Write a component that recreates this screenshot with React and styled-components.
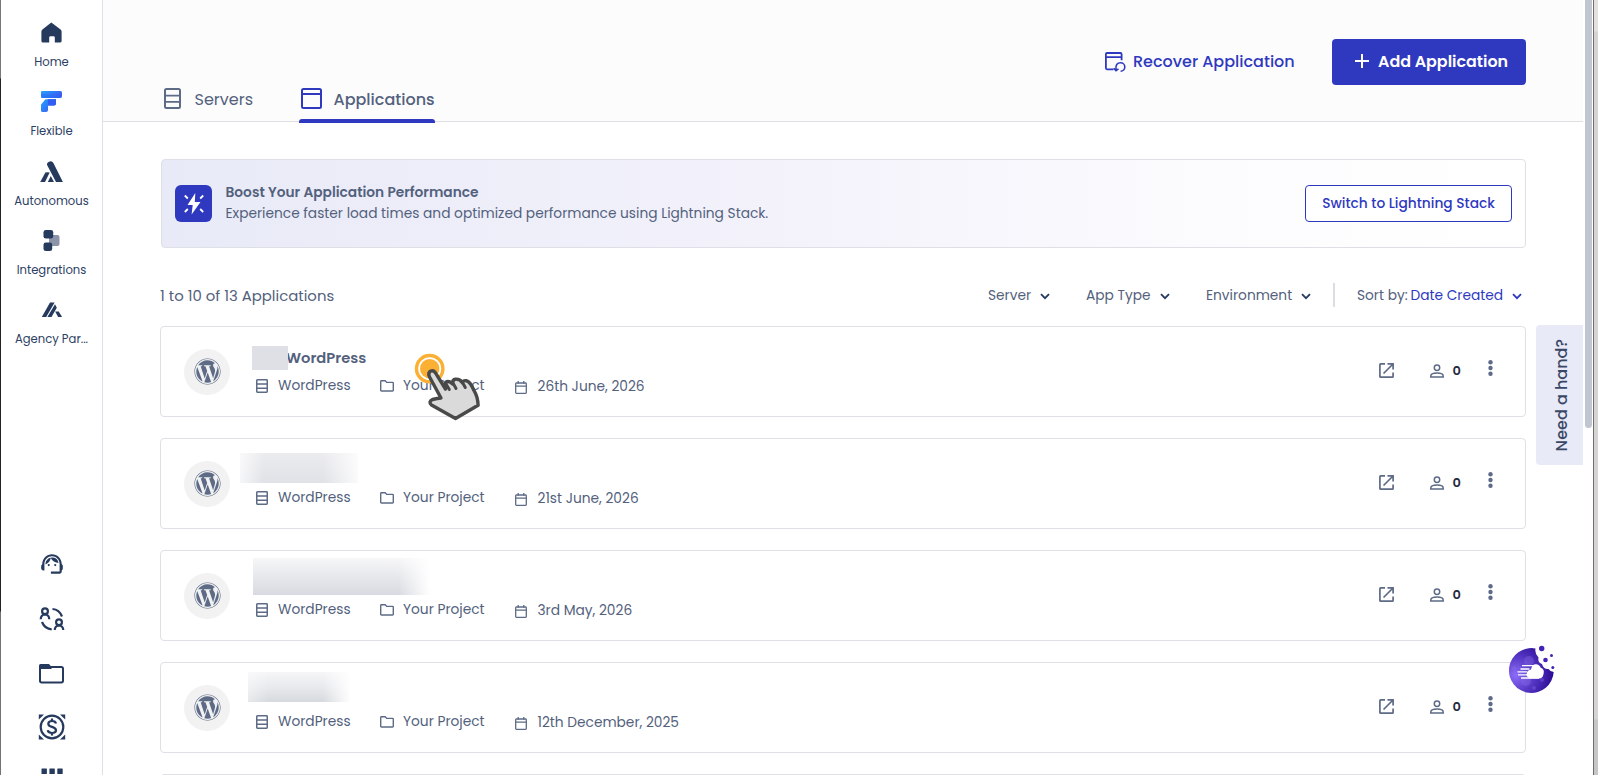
import React from "react";
import styled, { createGlobalStyle } from "styled-components";
import { FaWordpress } from "react-icons/fa";
import { MdOutlineSupportAgent } from "react-icons/md";

const navItems = [
  { label: "Home", icon: HomeIcon },
  { label: "Flexible", icon: FlexibleIcon },
  { label: "Autonomous", icon: AutonomousIcon },
  { label: "Integrations", icon: IntegrationsIcon },
  { label: "Agency Par...", icon: AgencyIcon },
];

const filters = [
  { label: "Server", width: 98 },
  { label: "App Type", width: 120 },
  { label: "Environment", width: 127 },
];

const apps = [
  { date: "26th June, 2026", name: "WordPress", mask: { left: 22, top: 19, width: 36, height: 24, kind: "flat" } },
  { date: "21st June, 2026", mask: { left: 10, top: 14, width: 118, height: 30, kind: "soft" } },
  { date: "3rd May, 2026", mask: { left: 23, top: 7, width: 177, height: 37, kind: "deep" } },
  { date: "12th December, 2025", mask: { left: 18, top: 9, width: 107, height: 30, kind: "fade" } },
];

function App() {
  return (
    <Page>
      <GlobalStyle />
      <LeftEdge />
      <Sidebar>
        <Nav>
          {navItems.map(({ label, icon: Icon }) => (
            <NavItem key={label}>
              <NavIcon><Icon /></NavIcon>
              <NavLabel>{label}</NavLabel>
            </NavItem>
          ))}
        </Nav>
        <Tools>
          <Tool $height={55}><MdOutlineSupportAgent size={26} /></Tool>
          <Tool $height={55}><SwapUsersIcon /></Tool>
          <Tool $height={54}><BigFolderIcon /></Tool>
          <Tool $height={54}><DollarIcon /></Tool>
          <Tool $height={50}><GridIcon /></Tool>
        </Tools>
      </Sidebar>
      <Main>
        <Header>
          <Tabs>
            <Tab $width={89}>
              <ServerIcon width={17} height={21} thick />
              <TabText>Servers</TabText>
            </Tab>
            <Tab $width={136} $active>
              <WindowIcon />
              <TabText $active>Applications</TabText>
            </Tab>
          </Tabs>
          <Actions>
            <RecoverLink>
              <RecoverIcon />
              <ActionText>Recover Application</ActionText>
            </RecoverLink>
            <AddButton>
              <PlusIcon />
              <ActionText>Add Application</ActionText>
            </AddButton>
          </Actions>
        </Header>
        <Content>
          <Banner>
            <BannerIcon><BoltIcon /></BannerIcon>
            <BannerText>
              <BannerTitle>Boost Your Application Performance</BannerTitle>
              <BannerSub>Experience faster load times and optimized performance using Lightning Stack.</BannerSub>
            </BannerText>
            <SwitchButton>Switch to Lightning Stack</SwitchButton>
          </Banner>
          <Toolbar>
            <Count>1 to 10 of 13 Applications</Count>
            <Filters>
              {filters.map((filter) => (
                <Filter key={filter.label} $width={filter.width}>
                  <FilterText>{filter.label}</FilterText>
                  <Chevron />
                </Filter>
              ))}
              <Divider />
              <Sort>
                <SortLabel>Sort by:</SortLabel>
                <SortValue>Date Created</SortValue>
                <Chevron />
              </Sort>
            </Filters>
          </Toolbar>
          <List>
            {apps.map((app) => (
              <AppCard key={app.date} app={app} />
            ))}
            <Card />
          </List>
        </Content>
      </Main>
      <ScrollGutter><ScrollThumb /></ScrollGutter>
      <WindowEdge />
      <HelpTab><span>Need a hand?</span></HelpTab>
      <ChatBubble><CookieIcon /></ChatBubble>
      <Pointer><HandIcon /></Pointer>
    </Page>
  );
}

function AppCard({ app }) {
  return (
    <Card>
      <Avatar><FaWordpress size={27} /></Avatar>
      <Info>
        <Name>{app.name}</Name>
        <Mask $mask={app.mask} />
        <Meta>
          <MetaItem $width={124}>
            <ServerIcon width={12} height={14} />
            <MetaText $gap={10}>WordPress</MetaText>
          </MetaItem>
          <MetaItem $width={135}>
            <FolderIcon />
            <MetaText $gap={9}>Your Project</MetaText>
          </MetaItem>
          <MetaItem $width={180} $down>
            <CalendarIcon />
            <MetaText $gap={10.5}>{app.date}</MetaText>
          </MetaItem>
        </Meta>
      </Info>
      <CardActions>
        <OpenIcon />
        <Members>
          <PersonIcon />
          <MemberCount>0</MemberCount>
        </Members>
        <More><DotsIcon /></More>
      </CardActions>
    </Card>
  );
}

function HomeIcon() {
  return (
    <svg width="21" height="21" viewBox="0 0 21 21">
      <path d="M10.3 .4 19.6 7.6q1 .8 1 2V19q0 1.6-1.6 1.6h-5.2v-5q0-1.3-1.3-1.3h-3q-1.3 0-1.3 1.300v5H2Q.4 20.600.4 19V9.600q0-1.200 1-2z" fill="#263a5e" />
    </svg>
  );
}

function FlexibleIcon() {
  return (
    <svg width="21" height="21" viewBox="0 0 21 21">
      <defs>
        <linearGradient id="flex" x1="0" y1="0" x2="1" y2=".6">
          <stop offset="0" stopColor="#22a5fb" />
          <stop offset="1" stopColor="#3f55f4" />
        </linearGradient>
      </defs>
      <path d="M1 0h18.500q1.500 0 1.500 1.500V5q0 2-2 2H1.500Q0 7 0 5.500V1q0-1 1-1z" fill="url(#flex)" />
      <path d="M0 2.500 21 5.500Q20.500 7 19 7H1.500Q0 7 0 5.500z" fill="#2272f5" opacity=".55" />
      <path d="M4.500 8.300H15v4.200q0 2-2 2H7V19q0 2-2 2H1.500Q0 21 0 19.500v-6z" fill="url(#flex)" />
      <path d="M7 8.300h8v4.200q0 2-2 2H7z" fill="#315df2" />
    </svg>
  );
}

function AutonomousIcon() {
  return (
    <svg width="23" height="21" viewBox="0 0 23 21" fill="#263a5e">
      <path d="M7.200 4.300q-.8-2 1.300-3.200 3.200-2 4.900.8L22.900 21h-6.900z" />
      <path d="M5.400 11.500q1.800-.700 4.300 0L5 21H.2z" />
      <path d="M10.800 15 14 21H7.800z" />
    </svg>
  );
}

function IntegrationsIcon() {
  return (
    <svg width="17" height="21" viewBox="0 0 17 21">
      <rect x="6" y="5" width="10.500" height="11" rx="2" fill="#8c94aa" />
      <rect x=".5" y="0" width="9.700" height="8.500" rx="2.300" fill="#263a5e" />
      <rect x=".5" y="12.500" width="8.700" height="8.500" rx="2.300" fill="#263a5e" />
    </svg>
  );
}

function AgencyIcon() {
  return (
    <svg width="22" height="21" viewBox="0 0 22 21" fill="#263a5e">
      <path d="M9 3.600h4.600L5.200 18.100H.8zM14 5.200l1.800 3.500-5.300 9.400H6.400z" />
      <path d="M14.200 12.500h3.500l3.400 5.600h-4z" />
    </svg>
  );
}

function SwapUsersIcon() {
  return (
    <svg width="26" height="24" viewBox="0 0 26 24" fill="none" stroke="#263a5e" strokeWidth="2.200">
      <circle cx="6" cy="4.300" r="2.900" />
      <path d="M1.700 12.200q.3-4.500 4.300-4.700 4 .2 4.300 4.700" />
      <circle cx="20" cy="15.300" r="2.900" />
      <path d="M15.700 23q.3-4.300 4.300-4.500 4 .2 4.300 4.500M13.500 2q6.800.5 9.500 7.500M3 15q2.800 7 9.700 7.300" />
    </svg>
  );
}

function BigFolderIcon() {
  return (
    <svg width="27" height="21" viewBox="0 0 27 21">
      <rect x="2" y="4" width="23" height="15.500" rx="1.700" fill="none" stroke="#263a5e" strokeWidth="2" />
      <path d="M1 5V2.500Q1 1 2.500 1H11l2.500 3v2H1z" fill="#263a5e" />
    </svg>
  );
}

function DollarIcon() {
  return (
    <svg width="28" height="26" viewBox="0 0 28 26" fill="none" stroke="#263a5e" strokeWidth="2.200">
      <circle cx="14" cy="13" r="11.300" />
      <path d="M18 9.500Q17.500 7 14 7t-3.700 2.700q0 2.300 3.700 3.200t4 3.400Q18 19 14 19t-4.200-2.800M14 4.500v2.700M14 18.800v2.700" />
      <path d="M.8.500H6L.8 5.500zM27.200.5H22l5.200 5zM.8 25.500H6L.8 20.500zM27.200 25.500H22l5.200-5z" fill="#263a5e" stroke="none" />
    </svg>
  );
}

function GridIcon() {
  return (
    <svg width="22" height="22" viewBox="0 0 22 22" fill="#263a5e">
      {[0.5, 8.4, 16.3].map((y) => [0.5, 8.4, 16.3].map((x) => <rect key={`${x}-${y}`} x={x} y={y} width="5.400" height="5.400" rx=".5" />))}
    </svg>
  );
}

function ServerIcon({ width, height, thick }) {
  const stroke = thick ? 2 : 1.5;
  const half = stroke / 2;
  return (
    <svg width={width} height={height} fill="none" stroke="#5d6b86" strokeWidth={stroke}>
      <rect x={half} y={half} width={width - stroke} height={height - stroke} rx={thick ? 1.5 : 0.7} />
      <path d={`M1 ${height * 0.36}H${width - 1}M1 ${height * 0.66}H${width - 1}`} strokeWidth={thick ? 1.7 : 1.4} />
    </svg>
  );
}

function WindowIcon() {
  return (
    <svg width="21" height="21" fill="none" stroke="#2f39bf" strokeWidth="2">
      <rect x="1" y="1" width="19" height="19" rx="1.500" />
      <path d="M1 6h19" />
    </svg>
  );
}

function RecoverIcon() {
  return (
    <svg width="21" height="21" viewBox="0 0 21 21" fill="none" stroke="#2f39bf" strokeWidth="1.800">
      <path d="M8.500 17.300H2q-1.100 0-1.100-1.200V2.100Q.9 1 2 1h13.400q1.200 0 1.200 1.200v6M1 5.200h15.600" />
      <path d="M11 17.500q-.8-6.700 4.600-6.700a4.200 4.200 0 0 1 0 8.400M8.700 16.300l2.300 2.300 2.500-1.800" strokeWidth="1.600" />
    </svg>
  );
}

function PlusIcon() {
  return (
    <svg width="14" height="14" stroke="#fff" strokeWidth="2">
      <path d="M0 7h14M7 0v14" />
    </svg>
  );
}

function BoltIcon() {
  return (
    <svg width="22" height="22" viewBox="0 0 22 22">
      <path d="M12.300 0 4.500 12H9.700L8.600 21.500 17.500 9h-5.700z" fill="#fff" />
      <path d="M1.800 2.500l3 3M20.200 2.500l-3 3M1.800 19l3-3M20.200 19l-3-3" stroke="#fff" strokeWidth="1.800" />
    </svg>
  );
}

function Chevron() {
  return (
    <svg width="10" height="7" viewBox="0 0 10 7" fill="none" stroke="currentColor" strokeWidth="1.800">
      <path d="M1 1.200l4 4 4-4" />
    </svg>
  );
}

function FolderIcon() {
  return (
    <svg width="14" height="12" fill="none" stroke="#5d6b86" strokeWidth="1.400">
      <path d="M.7 10.300V1.500Q.7.800 1.400.8h3.800l1.500 1.600h5.900q.7 0 .7.700v7.200q0 .7-.7.700H1.400q-.7 0-.7-.7z" />
    </svg>
  );
}

function CalendarIcon() {
  return (
    <svg width="12" height="13" fill="none" stroke="#5d6b86" strokeWidth="1.300">
      <rect x=".700" y="2" width="10.600" height="10.300" rx=".800" />
      <path d="M.7 5.200h10.600M3.200 0v2.500M8.800 0v2.500" />
    </svg>
  );
}

function OpenIcon() {
  return (
    <svg width="15" height="15" fill="none" stroke="#5d6b86" strokeWidth="1.700">
      <path d="M6 .9H1.600Q.9.900.9 1.600v11.800q0 .7.7.7h11.800q.7 0 .7-.7V9.500M8.500.9h5.600v5.600M4.500 10.500 14 1" />
    </svg>
  );
}

function PersonIcon() {
  return (
    <svg width="14" height="14" fill="none" stroke="#5d6b86" strokeWidth="1.500">
      <circle cx="7" cy="3.800" r="2.700" />
      <path d="M.8 13v-1q0-3 6.200-3t6.200 3v1z" />
    </svg>
  );
}

function DotsIcon() {
  return (
    <svg width="5" height="16" fill="#5d6b86">
      <circle cx="2.500" cy="2.300" r="2.200" />
      <circle cx="2.500" cy="8" r="2.200" />
      <circle cx="2.500" cy="13.700" r="2.200" />
    </svg>
  );
}

function CookieIcon() {
  return (
    <svg width="46" height="50" viewBox="0 0 46 50">
      <defs>
        <radialGradient id="cookie" cx=".15" cy=".6" r=".85">
          <stop offset="0" stopColor="#8c6cf8" />
          <stop offset=".5" stopColor="#5436c4" />
          <stop offset="1" stopColor="#2b0b92" />
        </radialGradient>
      </defs>
      <path d="M26.500 3.500A22.400 22.400 0 1 0 44.700 27q-3.500-.3-5.200-3-5 .5-6.500-5-4.500-1.500-3.500-6.500-4-4-3-9z" fill="url(#cookie)" />
      <g fill="#8b70e8" opacity=".35">
        <circle cx="20" cy="16" r="5" />
        <circle cx="17" cy="36" r="5" />
        <circle cx="25" cy="43" r="2" />
        <circle cx="33" cy="35" r="2" />
        <circle cx="5" cy="23" r="2" />
      </g>
      <path d="M21 33.500q-4.500-1.500-3-6 1.500-3 4-3 1-5.500 5-5.300 3.500 0 4.700 3.500 3.800 1 3 5.500-.8 5.300-4.700 5.300z" fill="#fff" />
      <path d="M13 20.700h14M11.500 24h9M8.500 26.800h10M9 29.800h10M12 33h18" stroke="#fff" strokeWidth="1.300" />
      <g fill="#4322b5">
        <circle cx="32.700" cy="3.500" r="2.700" />
        <circle cx="42.500" cy="10.500" r="1.500" />
        <circle cx="36.500" cy="15" r="2.300" />
        <circle cx="43.800" cy="22.500" r="1.500" />
      </g>
    </svg>
  );
}

function HandIcon() {
  return (
    <svg width="70" height="72" viewBox="0 0 70 72">
      <circle cx="15.700" cy="16.700" r="13.200" fill="#fff" stroke="#fbb034" strokeWidth="3.400" />
      <circle cx="15.700" cy="16.700" r="9.700" fill="#fbb034" />
      <path
        d="M41.500 66.500 17.500 53q-3.500-3 1-5.500 5-1.200 8.500-1.500L15.300 24.500q-1.500-4 1.500-5.500 3-1 5 2.300L31.500 37q-.5-6 1-7.300 3.500-1 6 2.300 0-4.500 2.800-4.800 4.500-.5 7 3.500 1-2.500 4-2 4 .7 7.500 9.500 4 6.500 4.300 15z"
        fill="#dadada"
        stroke="#494949"
        strokeWidth="3.400"
        strokeLinejoin="round"
      />
      <path d="M31.500 31l3.800 6.500M39 31l3 5.500M48.500 30.500l2.800 5" stroke="#494949" strokeWidth="3" strokeLinecap="round" />
    </svg>
  );
}

export default App;

const GlobalStyle = createGlobalStyle`
  * {
    box-sizing: border-box;
  }
  body {
    margin: 0;
    overflow: hidden;
    background: #fff;
    font-family: Poppins, Inter, "Noto Sans", sans-serif;
    color: #53617d;
  }
  svg {
    display: block;
    flex-shrink: 0;
  }
  button {
    font: inherit;
    cursor: pointer;
  }
`;
const Page = styled.div`
  position: relative;
  display: flex;
  height: 775px;
  overflow: hidden;
  white-space: nowrap;
`;
const LeftEdge = styled.div`
  width: 1px;
  background: linear-gradient(#77787a 0 78px, #222 79px 611px, #737373 612px);
`;
const Sidebar = styled.aside`
  width: 102px;
  border-right: 1px solid #dfdfe6;
  display: flex;
  flex-direction: column;
  align-items: center;
  justify-content: space-between;
  padding-top: 22px;
`;
const Nav = styled.nav`
  display: flex;
  flex-direction: column;
  width: 100%;
`;
const NavItem = styled.div`
  height: 69.300px;
  display: flex;
  flex-direction: column;
  align-items: center;
`;
const NavIcon = styled.div`
  height: 21px;
  margin-bottom: 11px;
`;
const NavLabel = styled.span`
  font-size: 11.600px;
  line-height: 17px;
  color: #2c4063;
`;
const Tools = styled.div`
  height: 239px;
  flex-shrink: 0;
`;
const Tool = styled.div`
  height: ${(props) => props.$height}px;
  display: flex;
  justify-content: center;
  align-items: center;
  color: #263a5e;
`;
const Main = styled.main`
  width: 1480px;
`;
const Header = styled.header`
  height: 122px;
  border-bottom: 1px solid #dfdfe3;
  background: #fcfcfc;
  display: flex;
  justify-content: space-between;
  padding: 0 57px 0 61px;
`;
const Tabs = styled.div`
  display: flex;
  align-items: flex-end;
  gap: 46px;
  height: 123px;
`;
const Tab = styled.div`
  width: ${(props) => props.$width}px;
  height: 45px;
  display: flex;
  align-items: flex-start;
  gap: ${(props) => (props.$active ? 11.5 : 13.5)}px;
  padding: 10px 0 0 ${(props) => (props.$active ? 2 : 0)}px;
  position: relative;

  &::after {
    content: "";
    position: absolute;
    left: 0;
    right: 0;
    bottom: 0;
    height: 4px;
    border-radius: 3px 3px 0 0;
    background: ${(props) => (props.$active ? "#2f39bf" : "transparent")};
  }
`;
const TabText = styled.span`
  font-size: 16px;
  line-height: 24px;
  font-weight: ${(props) => (props.$active ? 500 : 400)};
`;
const Actions = styled.div`
  display: flex;
  align-items: center;
  height: 46px;
  margin-top: 39px;
`;
const RecoverLink = styled.a`
  display: flex;
  align-items: center;
  gap: 7px;
  width: 227px;
  color: #2f39bf;
`;
const ActionText = styled.span`
  font-size: 16px;
  font-weight: 500;
  padding-bottom: 2px;
`;
const AddButton = styled.button`
  width: 194px;
  height: 46px;
  border: none;
  border-radius: 4px;
  background: #2f39bf;
  color: #fff;
  display: flex;
  align-items: center;
  gap: 9px;
  padding: 0 0 0 23px;

  svg {
    margin-bottom: 3px;
  }
  ${ActionText} {
    font-size: 15.900px;
    font-weight: 600;
  }
`;
const Content = styled.div`
  padding: 37px 57px 0 57px;
`;
const Banner = styled.section`
  height: 89px;
  margin-left: 1px;
  border: 1px solid #dfdfe6;
  border-radius: 4px;
  background: linear-gradient(90deg, #e8eaf7, #f3f2fb 45%, #fcfcfe 78%, #fff);
  display: flex;
  align-items: center;
  padding: 0 13px;
`;
const BannerIcon = styled.div`
  width: 37px;
  height: 37px;
  border-radius: 6px;
  background: #2f39bf;
  display: flex;
  align-items: center;
  justify-content: center;
`;
const BannerText = styled.div`
  display: flex;
  flex-direction: column;
  margin-left: 13.500px;
  margin-top: -2px;
`;
const BannerTitle = styled.span`
  font-size: 13.750px;
  line-height: 21px;
  font-weight: 600;
`;
const BannerSub = styled.span`
  font-size: 13.750px;
  line-height: 21px;
`;
const SwitchButton = styled.button`
  margin-left: auto;
  width: 207px;
  height: 37px;
  padding: 0;
  border: 1px solid #2f39bf;
  border-radius: 4px;
  background: #fff;
  color: #2f39bf;
  font-size: 13.750px;
  font-weight: 500;
`;
const Toolbar = styled.div`
  height: 48px;
  margin: 23px 0 7px;
  display: flex;
  align-items: center;
  justify-content: space-between;
`;
const Count = styled.span`
  padding-top: 2px;
  font-size: 14.900px;
`;
const Filters = styled.div`
  display: flex;
  align-items: center;
  font-size: 13.750px;
`;
const Filter = styled.div`
  width: ${(props) => props.$width}px;
  padding-top: 2px;
  display: flex;
  align-items: center;
  gap: 9px;
  color: #263a5e;
`;
const FilterText = styled.span`
  color: #53617d;
`;
const Divider = styled.div`
  width: 2px;
  height: 24px;
  background: #dcdce4;
`;
const Sort = styled.div`
  width: 191px;
  padding: 2px 0 0 22px;
  display: flex;
  align-items: center;
  color: #2f39bf;
`;
const SortLabel = styled.span`
  width: 53.500px;
  color: #53617d;
`;
const SortValue = styled.span`
  width: 101.500px;
`;
const List = styled.div`
  display: flex;
  flex-direction: column;
  gap: 21px;
`;
const Card = styled.article`
  height: 91px;
  flex-shrink: 0;
  border: 1px solid #dfdfe6;
  border-radius: 4px;
  display: flex;
  align-items: center;
  padding-left: 23px;
`;
const Avatar = styled.div`
  width: 46px;
  height: 46px;
  border-radius: 50%;
  background: #f2f2f2;
  color: #5d6b86;
  display: flex;
  align-items: center;
  justify-content: center;
  padding-bottom: 1px;
`;
const Info = styled.div`
  position: relative;
  height: 89px;
  flex: 1;
  padding: 20px 0 0 26px;
`;
const Name = styled.div`
  height: 22px;
  padding-left: 30px;
  font-size: 14.700px;
  line-height: 22px;
  font-weight: 600;
`;
const maskFills = {
  flat: "#dee0e5",
  soft: "linear-gradient(90deg, rgba(255,255,255,.7), transparent 20% 70%, rgba(255,255,255,.85)), linear-gradient(#ececef, #dfe2e6)",
  deep: "linear-gradient(90deg, transparent 82%, #fff), linear-gradient(#f7f7f8, #e9ebee 40%, #d7dae0)",
  fade: "linear-gradient(90deg, rgba(255,255,255,.4), transparent 20% 70%, #fff 96%), linear-gradient(#f6f6f8, #e6e8eb 55%, #d6dade)",
};
/* blurred block that hides part of the application name */
const Mask = styled.div`
  position: absolute;
  left: ${(props) => props.$mask.left}px;
  top: ${(props) => props.$mask.top}px;
  width: ${(props) => props.$mask.width}px;
  height: ${(props) => props.$mask.height}px;
  background: ${(props) => maskFills[props.$mask.kind]};
`;
const Meta = styled.div`
  display: flex;
  margin-top: 6px;
`;
const MetaItem = styled.div`
  width: ${(props) => props.$width}px;
  height: 22px;
  display: flex;
  align-items: center;
  padding-top: ${(props) => (props.$down ? 2 : 0)}px;
`;
const MetaText = styled.span`
  margin-left: ${(props) => props.$gap}px;
  font-size: 13.750px;
`;
const CardActions = styled.div`
  display: flex;
  align-items: center;
  width: 146px;
  height: 22px;
  margin-bottom: 2px;
`;
const Members = styled.div`
  display: flex;
  align-items: center;
  width: 58px;
  margin-left: 36px;
`;
const MemberCount = styled.span`
  margin-left: 8.500px;
  font-size: 13px;
  font-weight: 600;
  color: #1f2a3d;
`;
const More = styled.div`
  padding-bottom: 5px;
`;
const ScrollGutter = styled.div`
  width: 10px;
  padding: 0 1px 0 2px;
  flex-shrink: 0;
`;
const ScrollThumb = styled.div`
  height: 428px;
  border-radius: 0 0 4px 4px;
  background: #bfc6d0;
`;
const WindowEdge = styled.div`
  width: 5px;
  flex-shrink: 0;
  border-left: 1px solid #6d6d6d;
  background: linear-gradient(#e3e0e0 0 31px, #d6d3d3 32px 719px, #c6c6c6 720px);
`;
const HelpTab = styled.div`
  position: absolute;
  left: 1536px;
  top: 325px;
  width: 47px;
  height: 140px;
  border-radius: 4px 0 0 4px;
  background: #e8eaf8;
  display: flex;
  align-items: center;
  justify-content: center;
  writing-mode: vertical-rl;
  color: #3a4866;
  font-size: 16px;
  font-weight: 500;

  span {
    transform: rotate(180deg);
    margin-left: 4px;
  }
`;
const ChatBubble = styled.div`
  position: absolute;
  left: 1509px;
  top: 645px;
`;
const Pointer = styled.div`
  position: absolute;
  left: 414px;
  top: 352px;
`;
